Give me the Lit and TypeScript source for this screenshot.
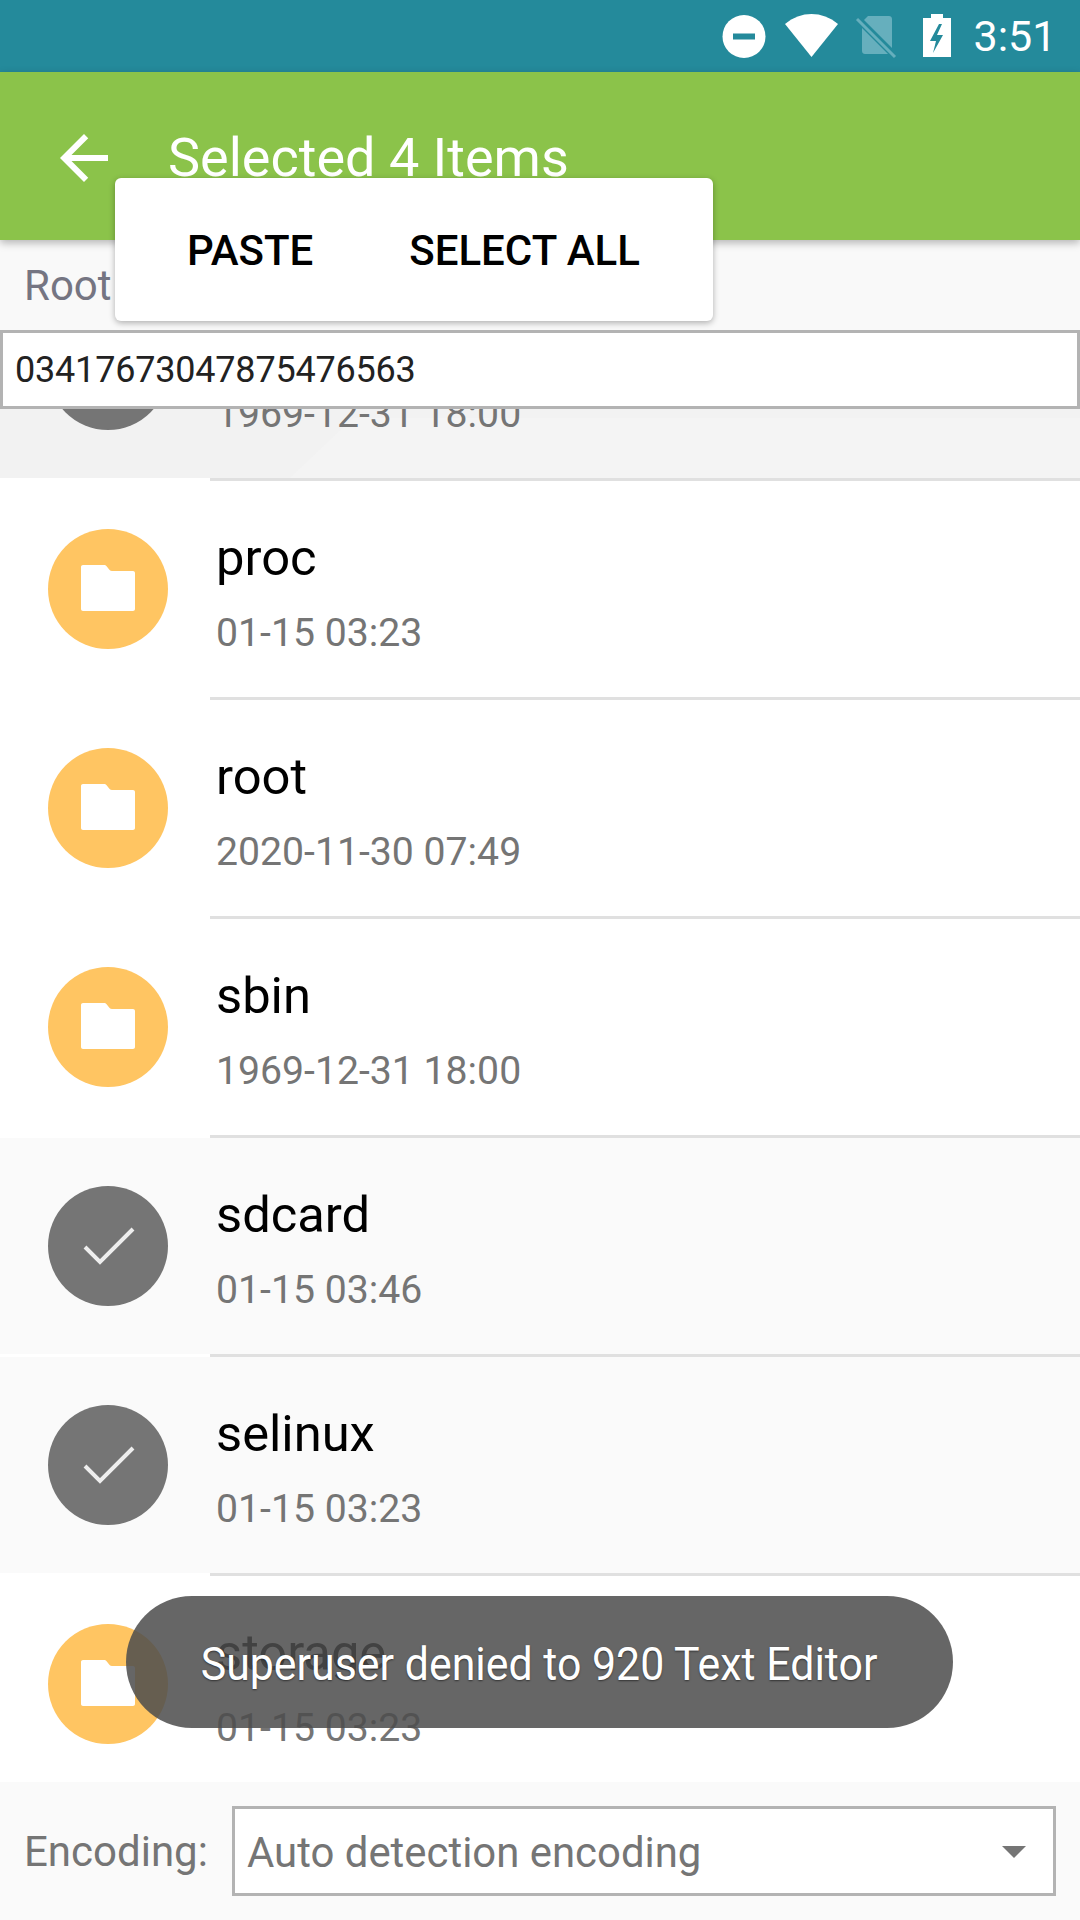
import { LitElement, html, css, svg } from 'lit';
import { customElement } from 'lit/decorators.js';

interface FileRow {
    name: string;
    date: string;
    state?: 'selected' | 'pressed';
}

const ROWS: FileRow[] = [
    { name: 'bin', date: '1969-12-31 18:00', state: 'pressed' },
    { name: 'proc', date: '01-15 03:23' },
    { name: 'root', date: '2020-11-30 07:49' },
    { name: 'sbin', date: '1969-12-31 18:00' },
    { name: 'sdcard', date: '01-15 03:46', state: 'selected' },
    { name: 'selinux', date: '01-15 03:23', state: 'selected' },
    { name: 'storage', date: '01-15 03:23' },
];

const folderIcon = svg`<path d="M83 566h21c1 0 2 .4 2.6 1.2l3 3.8c.6.7 1.500 1 2.400 1H133c1.100 0 2 .9 2 2v36c0 1.100-.9 2-2 2H83c-1.100 0-2-.9-2-2v-42c0-1.100.9-2 2-2z" transform="translate(-48 -530)"/>`;

@customElement('app-root')
export class AppRoot extends LitElement {

    static styles = css`
        :host {
            display: flex;
            flex-direction: column;
            position: relative;
            width: 1080px;
            height: 1920px;
            overflow: hidden;
            background: #fff;
            font-family: Roboto, sans-serif;
        }

        .status {
            height: 72px;
            flex: none;
            background: #248a9b;
        }

        .status svg {
            display: block;
        }

        .toolbar {
            position: relative;
            z-index: 2;
            height: 168px;
            flex: none;
            box-sizing: border-box;
            padding: 50px 0 0 48px;
            display: flex;
            align-items: flex-start;
            background: #8bc34a;
            box-shadow: 0 3px 8px rgba(0, 0, 0, 0.28);
            color: #fff;
        }

        .toolbar svg {
            display: block;
            fill: #fff;
        }

        .title {
            margin-left: 48px;
            font-size: 54px;
            line-height: 72px;
            white-space: nowrap;
        }

        .path {
            height: 90px;
            flex: none;
            box-sizing: border-box;
            padding: 14px 0 0 24px;
            background: #f9f9f9;
            color: #757582;
            font-size: 42px;
            line-height: 64px;
        }

        .input {
            position: relative;
            z-index: 1;
            height: 79px;
            flex: none;
            box-sizing: border-box;
            padding: 2px 0 0 12px;
            border: 3px solid #b3b3b3;
            background: #fff;
            color: #222;
            font-size: 36px;
            letter-spacing: -0.2px;
            line-height: 71px;
        }

        .list {
            flex: 1;
            min-height: 0;
            overflow: hidden;
        }

        .rows {
            margin-top: -147px;
        }

        .row {
            position: relative;
            height: 219px;
            box-sizing: border-box;
            padding-left: 48px;
            display: flex;
            align-items: flex-start;
        }

        .row::after {
            content: '';
            position: absolute;
            left: 210px;
            right: 0;
            bottom: 0;
            height: 3px;
            background: #e0e0e0;
        }

        .fill {
            position: absolute;
            left: 0;
            right: 0;
            top: 0;
            bottom: 3px;
        }

        .row.selected .fill {
            background: #fafafa;
        }

        .row.pressed .fill {
            background: #f2f2f2;
        }

        .ripple {
            position: absolute;
            right: 0;
            bottom: 0;
            width: 790px;
            height: 60px;
            background: #f4f4f4;
            clip-path: polygon(0 100%, 8% 0, 100% 0, 100% 100%);
        }

        .badge {
            position: relative;
            flex: none;
            width: 120px;
            height: 120px;
            margin-top: 48px;
            border-radius: 50%;
            background: #ffc562;
        }

        .badge svg {
            display: block;
        }

        .selected .badge,
        .pressed .badge {
            background: #757575;
        }

        .text {
            position: relative;
            margin-left: 48px;
            padding-top: 47px;
        }

        .name {
            color: #000;
            font-size: 50.7px;
            line-height: 60px;
        }

        .date {
            margin-top: 21px;
            color: #757575;
            font-size: 39.2px;
            line-height: 48px;
        }

        .footer {
            height: 138px;
            flex: none;
            box-sizing: border-box;
            padding: 24px;
            display: flex;
            align-items: stretch;
            background: #fafafa;
            color: #757575;
            font-size: 42px;
        }

        .footer label {
            width: 208px;
            flex: none;
            padding-top: 2px;
            line-height: 88px;
        }

        .select {
            flex: 1;
            display: flex;
            align-items: center;
            justify-content: space-between;
            box-sizing: border-box;
            padding: 2px 27px 0 12px;
            border: 3px solid #b3b3b3;
            background: #fff;
            font-size: 41.9px;
        }

        .caret {
            width: 0;
            height: 0;
            border-left: 12px solid transparent;
            border-right: 12px solid transparent;
            border-top: 12px solid #757575;
        }

        .popup {
            position: absolute;
            z-index: 3;
            left: 115px;
            top: 178px;
            width: 598px;
            height: 143px;
            box-sizing: border-box;
            padding: 2px 0 0 72px;
            display: flex;
            align-items: center;
            gap: 96px;
            border-radius: 6px;
            background: #fff;
            box-shadow: 0 2px 6px rgba(0, 0, 0, 0.3);
            color: #000;
            font-size: 42px;
            font-weight: 500;
        }

        .toast {
            position: absolute;
            z-index: 3;
            left: 126px;
            top: 1596px;
            width: 827px;
            height: 132px;
            box-sizing: border-box;
            padding-top: 4px;
            display: flex;
            align-items: center;
            justify-content: center;
            border-radius: 66px;
            background: rgba(77, 77, 77, 0.86);
            color: #fff;
            font-size: 46px;
            white-space: nowrap;
            text-shadow: 0 1px 2px rgba(0, 0, 0, 0.5);
        }

        .toast span {
            transform: scaleX(0.932);
        }
    `;

    renderStatus() {
        return html`
            <svg width="1080" height="72" viewBox="0 0 1080 72">
                <circle cx="744" cy="36.500" r="21.500" fill="#fff"/>
                <rect x="733" y="33.500" width="22" height="6" fill="#248a9b"/>
                <path d="M785 24c16-13.300 37-13.300 53 0l-26.500 33z" fill="#fff"/>
                <path d="M868 16h21c1.700 0 3 1.300 3 3v32c0 1.700-1.300 3-3 3h-24c-1.700 0-3-1.300-3-3V22z" fill="#66afbd"/>
                <path d="M855 16l40 40" stroke="#248a9b" stroke-width="7" fill="none"/>
                <path d="M857 19l38 38" stroke="#66afbd" stroke-width="3" fill="none"/>
                <path d="M931 14h12v4h8v39h-28V18h8z" fill="#fff"/>
                <path d="M939 24l-9 17h6l-3 12 10-18h-6l5-11z" fill="#248a9b"/>
                <text x="973.500" y="51" font-size="43" fill="#fff">3:51</text>
            </svg>
        `;
    }

    renderRow(row: FileRow) {
        return html`
            <div class="row ${row.state ?? ''}">
                <div class="fill">
                    ${row.state === 'pressed' ? html`<div class="ripple"></div>` : ''}
                </div>
                <div class="badge">
                    <svg width="120" height="120" viewBox="0 0 120 120">
                        ${row.state
                            ? svg`<path d="M37 61l15 15 33-33" fill="none" stroke="#eee" stroke-width="4"/>`
                            : svg`<g fill="#fff">${folderIcon}</g>`}
                    </svg>
                </div>
                <div class="text">
                    <div class="name">${row.name}</div>
                    <div class="date">${row.date}</div>
                </div>
            </div>
        `;
    }

    render() {
        return html`
            <div class="status">${this.renderStatus()}</div>
            <div class="toolbar">
                <svg width="72" height="72" viewBox="0 0 24 24">
                    <path d="M20 11H7.830l5.590-5.590L12 4l-8 8 8 8 1.410-1.410L7.830 13H20v-2z"/>
                </svg>
                <div class="title">Selected 4 Items</div>
            </div>
            <div class="path">Root</div>
            <div class="input">03417673047875476563</div>
            <div class="list">
                <div class="rows">${ROWS.map((row) => this.renderRow(row))}</div>
            </div>
            <div class="footer">
                <label>Encoding:</label>
                <div class="select">
                    <span>Auto detection encoding</span>
                    <span class="caret"></span>
                </div>
            </div>
            <div class="popup"><span>PASTE</span><span>SELECT ALL</span></div>
            <div class="toast"><span>Superuser denied to 920 Text Editor</span></div>
        `;
    }

}
